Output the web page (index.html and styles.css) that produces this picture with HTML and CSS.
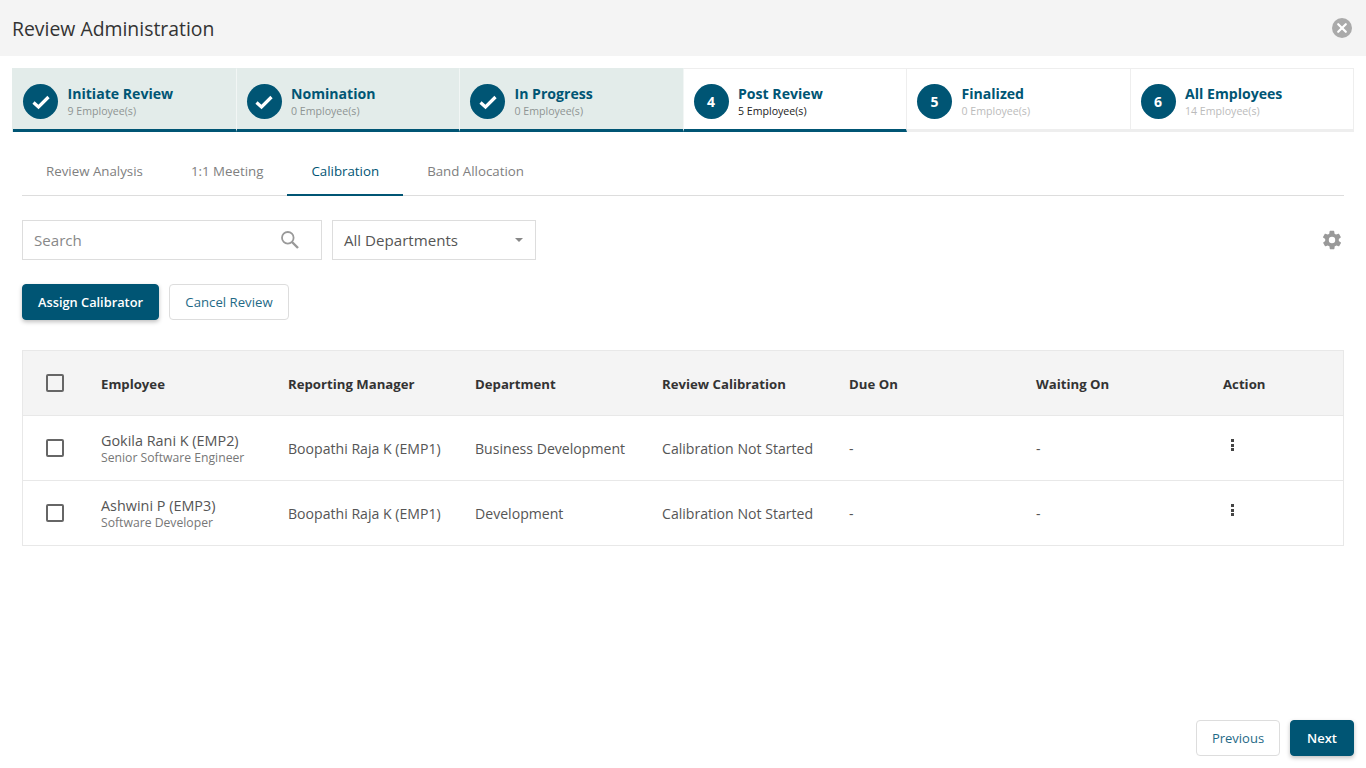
FILE: index.html
```html
<!DOCTYPE html>
<html lang="en">
<head>
    <meta charset="UTF-8">
    <meta name="viewport" content="width=device-width, initial-scale=1.0">
    <title>Review Administration</title>
    <link rel="stylesheet" href="styles.css">
</head>
<body>

    <header class="page-header">
        <h1>Review Administration</h1>
        <button class="close-btn" aria-label="Close">
            <svg width="20" height="20" viewBox="0 0 20 20"><circle cx="10" cy="10" r="10" fill="#aaa"/><path d="M6.2 6.2l7.6 7.6M13.8 6.2l-7.6 7.6" stroke="#fff" stroke-width="2.2" stroke-linecap="round"/></svg>
        </button>
    </header>

    <div class="stepper">
        <div class="step done">
            <span class="step-circle"><svg width="20" height="16" viewBox="0 0 20 16"><path d="M2.5 8.5l5 4.5 10-10" fill="none" stroke="#fff" stroke-width="3.2"/></svg></span>
            <div class="step-text"><div class="step-title">Initiate Review</div><div class="step-count">9 Employee(s)</div></div>
        </div>
        <div class="step done">
            <span class="step-circle"><svg width="20" height="16" viewBox="0 0 20 16"><path d="M2.5 8.5l5 4.5 10-10" fill="none" stroke="#fff" stroke-width="3.2"/></svg></span>
            <div class="step-text"><div class="step-title">Nomination</div><div class="step-count">0 Employee(s)</div></div>
        </div>
        <div class="step done">
            <span class="step-circle"><svg width="20" height="16" viewBox="0 0 20 16"><path d="M2.5 8.5l5 4.5 10-10" fill="none" stroke="#fff" stroke-width="3.2"/></svg></span>
            <div class="step-text"><div class="step-title">In Progress</div><div class="step-count">0 Employee(s)</div></div>
        </div>
        <div class="step current">
            <span class="step-circle">4</span>
            <div class="step-text"><div class="step-title">Post Review</div><div class="step-count">5 Employee(s)</div></div>
        </div>
        <div class="step">
            <span class="step-circle">5</span>
            <div class="step-text"><div class="step-title">Finalized</div><div class="step-count">0 Employee(s)</div></div>
        </div>
        <div class="step">
            <span class="step-circle">6</span>
            <div class="step-text"><div class="step-title">All Employees</div><div class="step-count">14 Employee(s)</div></div>
        </div>
    </div>

    <main class="content">
        <nav class="tabs">
            <a class="tab">Review Analysis</a>
            <a class="tab">1:1 Meeting</a>
            <a class="tab active">Calibration</a>
            <a class="tab">Band Allocation</a>
        </nav>

        <div class="filters">
            <div class="search-box">
                <span class="search-placeholder">Search</span>
                <svg width="20" height="20" viewBox="0 0 20 20"><circle cx="7.8" cy="7.8" r="5.8" fill="none" stroke="#999" stroke-width="1.8"/><path d="M12 12l6 6" stroke="#999" stroke-width="2.4"/></svg>
            </div>
            <div class="select-box">
                <span>All Departments</span>
                <span class="caret"></span>
            </div>
            <svg class="gear" width="22" height="22" viewBox="0 0 24 24"><path fill="#999" d="M19.4 13a7.6 7.6 0 0 0 0-2l2.1-1.6a.5.5 0 0 0 .1-.6l-2-3.5a.5.5 0 0 0-.6-.2l-2.5 1a7.4 7.4 0 0 0-1.7-1l-.4-2.6a.5.5 0 0 0-.5-.5h-4a.5.5 0 0 0-.5.5l-.4 2.6a7.4 7.4 0 0 0-1.7 1l-2.5-1a.5.5 0 0 0-.6.2l-2 3.5a.5.5 0 0 0 .1.6L4.6 11a7.6 7.6 0 0 0 0 2l-2.1 1.6a.5.5 0 0 0-.1.6l2 3.5c.1.2.4.3.6.2l2.5-1c.5.4 1.1.7 1.7 1l.4 2.6c0 .3.2.5.5.5h4c.3 0 .5-.2.5-.5l.4-2.6c.6-.3 1.2-.6 1.7-1l2.5 1c.2.1.5 0 .6-.2l2-3.5a.5.5 0 0 0-.1-.6zM12 15.5a3.5 3.5 0 1 1 0-7 3.5 3.5 0 0 1 0 7z"/></svg>
        </div>

        <div class="actions">
            <button class="btn btn-primary">Assign Calibrator</button>
            <button class="btn btn-outline">Cancel Review</button>
        </div>

        <table class="grid">
            <thead>
                <tr>
                    <th class="col-check"><span class="checkbox"></span></th>
                    <th>Employee</th>
                    <th>Reporting Manager</th>
                    <th>Department</th>
                    <th>Review Calibration</th>
                    <th>Due On</th>
                    <th>Waiting On</th>
                    <th class="col-action">Action</th>
                </tr>
            </thead>
            <tbody>
                <tr>
                    <td class="col-check"><span class="checkbox"></span></td>
                    <td><div class="emp-name">Gokila Rani K (EMP2)</div><div class="emp-role">Senior Software Engineer</div></td>
                    <td>Boopathi Raja K (EMP1)</td>
                    <td>Business Development</td>
                    <td>Calibration Not Started</td>
                    <td>-</td>
                    <td>-</td>
                    <td class="col-action"><span class="dots"><i></i><i></i><i></i></span></td>
                </tr>
                <tr>
                    <td class="col-check"><span class="checkbox"></span></td>
                    <td><div class="emp-name">Ashwini P (EMP3)</div><div class="emp-role">Software Developer</div></td>
                    <td>Boopathi Raja K (EMP1)</td>
                    <td>Development</td>
                    <td>Calibration Not Started</td>
                    <td>-</td>
                    <td>-</td>
                    <td class="col-action"><span class="dots"><i></i><i></i><i></i></span></td>
                </tr>
            </tbody>
        </table>
    </main>

    <footer class="page-footer">
        <button class="btn btn-outline btn-prev">Previous</button>
        <button class="btn btn-primary btn-next">Next</button>
    </footer>

</body>
</html>
```

FILE: styles.css
```css
* {
    box-sizing: border-box;
}

body {
    font-family: 'Open Sans', 'Noto Sans', sans-serif;
    font-size: 14px;
    color: #444;
    background: #fff;
    margin: 0;
    height: 100vh;
    display: flex;
    flex-direction: column;
    overflow: hidden;
}

.page-header {
    height: 56px;
    flex: none;
    background: #f4f4f4;
    display: flex;
    align-items: center;
    justify-content: space-between;
    padding: 0 14px 0 12px;
}

.page-header h1 {
    margin: 0;
    font-size: 19.4px;
    font-weight: 400;
    color: #333;
}

.close-btn {
    border: none;
    background: none;
    padding: 0;
    height: 20px;
}

/* stepper */
.stepper {
    display: grid;
    grid-template-columns: repeat(6, 1fr);
    margin: 12px 12px 0 13px;
    height: 64px;
    flex: none;
}

.step {
    display: flex;
    align-items: flex-start;
    gap: 9.5px;
    padding: 15px 0 0 10px;
    border-top: 1px solid #eee;
    border-right: 1px solid #eee;
    border-bottom: 3px solid #eee;
}

.step.done {
    background: #e3ecea;
    border-top-color: #e3ecea;
    border-right-color: #f2f6f5;
    border-bottom-color: #005574;
}

.step.done:first-child {
    box-shadow: -1px 0 0 #e3ecea;
}

.step.current {
    border-bottom-color: #005574;
}

.step-circle {
    width: 35px;
    height: 35px;
    flex: none;
    border-radius: 50%;
    background: #005574;
    color: #fff;
    font-weight: 700;
    font-size: 14px;
    display: flex;
    align-items: center;
    justify-content: center;
}

.step-text {
    margin-top: 1px;
}

.step-title {
    font-size: 14.1px;
    font-weight: 700;
    line-height: 18px;
    color: #005574;
}

.step-count {
    font-size: 10.6px;
    line-height: 16px;
    color: #bbb;
}

.step.done .step-count {
    color: #8e9493;
}

.step.current .step-count {
    color: #222;
}

/* page body */
.content {
    padding: 0 22px;
}

.tabs {
    display: flex;
    margin-top: 15px;
    height: 49px;
    border-bottom: 1px solid #ddd;
}

.tab {
    padding: 0 24px;
    height: 49px;
    line-height: 48px;
    font-size: 13.3px;
    color: #808080;
}

.tab.active {
    color: #005574;
    border-bottom: 2px solid #005574;
}

.filters {
    display: flex;
    align-items: center;
    gap: 10px;
    margin-top: 24px;
}

.search-box,
.select-box {
    height: 40px;
    border: 1px solid #ddd;
    display: flex;
    align-items: center;
    justify-content: space-between;
    font-size: 15.1px;
}

.search-box {
    width: 300px;
    padding: 0 21px 0 11px;
}

.search-placeholder {
    color: #888;
}

.select-box {
    width: 204px;
    padding: 0 12px 0 11px;
    color: #555;
}

.caret {
    width: 0;
    height: 0;
    border-left: 4px solid transparent;
    border-right: 4px solid transparent;
    border-top: 4px solid #888;
}

.gear {
    margin-left: auto;
    margin-right: 1px;
}

.actions {
    display: flex;
    gap: 10px;
    margin-top: 24px;
}

.btn {
    height: 36px;
    border-radius: 4px;
    font-family: inherit;
    font-size: 13px;
    padding: 0;
}

.btn-primary {
    width: 137px;
    background: #005574;
    color: #fff;
    border: 1px solid #005574;
    font-size: 12.8px;
    font-weight: 600;
    box-shadow: 0 2px 4px rgba(0, 0, 0, 0.25);
}

.btn-outline {
    width: 120px;
    background: #fff;
    color: #1f6a87;
    border: 1px solid #ddd;
    font-size: 13.2px;
}

/* table */
.grid {
    width: 100%;
    margin-top: 30px;
    border-collapse: collapse;
    table-layout: fixed;
    border: 1px solid #e8e8e8;
}

.grid th,
.grid td {
    text-align: left;
    padding: 0;
    width: 187px;
    vertical-align: middle;
}

.grid th {
    height: 65px;
    padding-top: 2px;
    background: #f4f4f4;
    font-size: 13.2px;
    font-weight: 700;
    color: #333;
}

.grid td {
    height: 65px;
    border-top: 1px solid #e8e8e8;
    font-size: 14.1px;
    color: #555;
}

.grid .col-check {
    width: 78.5px;
    padding: 0 0 0 23px;
}

.grid .col-action {
    width: 120.5px;
}

.checkbox {
    display: block;
    width: 18px;
    height: 18px;
    border: 2px solid #666;
    border-radius: 2px;
    background: #fff;
}

.grid th .checkbox {
    background: transparent;
}

.emp-name {
    font-size: 14.4px;
    line-height: 19px;
    color: #555;
}

.emp-role {
    font-size: 12.2px;
    line-height: 16px;
    color: #777;
}

.dots {
    display: flex;
    flex-direction: column;
    gap: 1.5px;
    width: 3px;
    margin: 0 0 6px 7.5px;
}

.dots i {
    display: block;
    width: 3px;
    height: 3px;
    background: #444;
}

.page-footer {
    margin-top: auto;
    display: flex;
    justify-content: flex-end;
    gap: 10px;
    padding: 0 12px 12px;
}

.btn-prev {
    width: 84px;
    font-size: 13px;
}

.btn-next {
    width: 64px;
    font-size: 13px;
}
```
